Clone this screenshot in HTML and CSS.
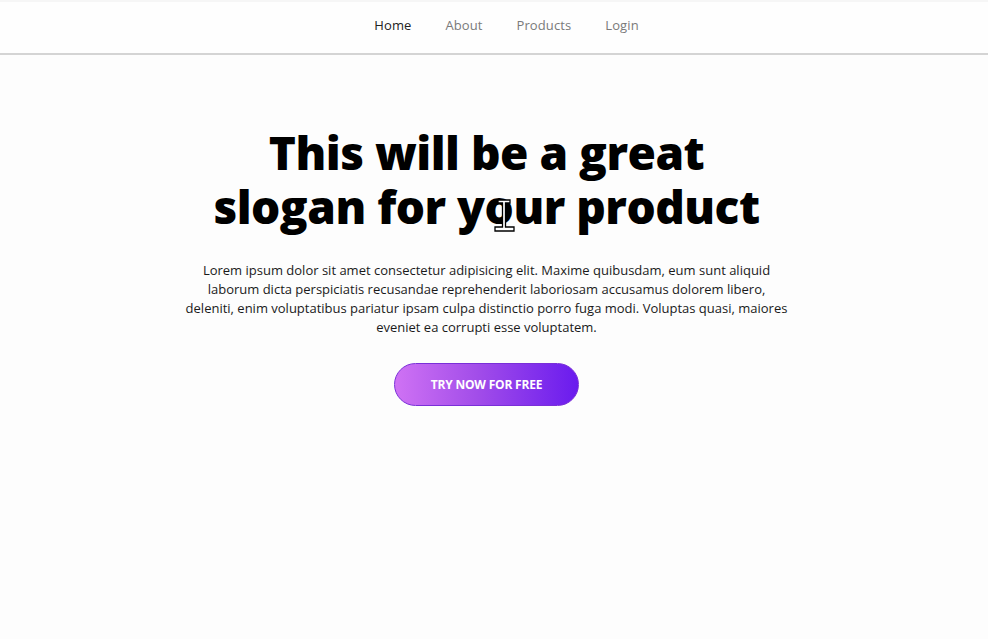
FILE: index.html
```html
<!DOCTYPE html>
<html lang="en">
<head>
<meta charset="utf-8">
<title>Landing</title>
<link rel="stylesheet" href="styles.css">
</head>
<body>
<header class="topbar">
  <nav class="nav">
    <a class="nav-link active" href="#">Home</a>
    <a class="nav-link" href="#">About</a>
    <a class="nav-link" href="#">Products</a>
    <a class="nav-link" href="#">Login</a>
  </nav>
</header>
<main class="hero">
  <div class="title-wrap">
    <h1 class="title">This will be a great<br>slogan for your product</h1>
    <svg class="cursor" width="22" height="35" viewBox="0 0 22 35" aria-hidden="true">
      <path d="M4 2 H16 V5 H11.5 V29 H20 V33 H1 V29 H8.5 V5 H4 Z" fill="#fff" stroke="#000" stroke-width="1.3" stroke-linejoin="miter"/>
    </svg>
  </div>
  <p class="lead">Lorem ipsum dolor sit amet consectetur adipisicing elit. Maxime quibusdam, eum sunt aliquid laborum dicta perspiciatis recusandae reprehenderit laboriosam accusamus dolorem libero, deleniti, enim voluptatibus pariatur ipsam culpa distinctio porro fuga modi. Voluptas quasi, maiores eveniet ea corrupti esse voluptatem.</p>
  <a class="cta" href="#">TRY NOW FOR FREE</a>
</main>
</body>
</html>
```

FILE: styles.css
```css
* { box-sizing: border-box; }
html, body { margin: 0; padding: 0; }
body {
  background: #fdfdfd;
  font-family: "Open Sans", "Liberation Sans", sans-serif;
  color: #111;
  min-height: 639px;
}
.topbar {
  height: 55px;
  border-top: 2px solid #f6f6f6;
  border-bottom: 2px solid #d4d4d4;
  background: #fefefe;
  display: flex;
  align-items: center;
  justify-content: center;
  padding: 0 0 5px 25px;
}
.nav {
  display: flex;
  gap: 34px;
  align-items: center;
}
.nav-link {
  font-size: 13px;
  color: #7a7a7a;
  text-decoration: none;
  letter-spacing: 0.1px;
}
.nav-link.active { color: #222; }
.hero {
  display: flex;
  flex-direction: column;
  align-items: center;
  padding: 70px 15px 0 0;
}
.title-wrap { position: relative; }
.title {
  margin: 0;
  font-family: "Open Sans", sans-serif;
  font-weight: 800;
  font-size: 46px;
  line-height: 54px;
  text-align: center;
  color: #000;
  letter-spacing: -0.5px;
}
.cursor {
  position: absolute;
  left: 281px;
  top: 73px;
}
.lead {
  margin: 28px 0 0;
  width: 606px;
  font-size: 13px;
  line-height: 19px;
  text-align: center;
  color: #1a1a1a;
}
.cta {
  margin-top: 26px;
  width: 185px;
  height: 43px;
  border-radius: 22px;
  border: 1px solid #7a2fd8;
  background: linear-gradient(90deg, #cf72f4 0%, #a24de9 45%, #6a1bee 100%);
  color: #fff;
  font-weight: 700;
  font-size: 12px;
  letter-spacing: -0.2px;
  text-decoration: none;
  display: flex;
  align-items: center;
  justify-content: center;
}
```
